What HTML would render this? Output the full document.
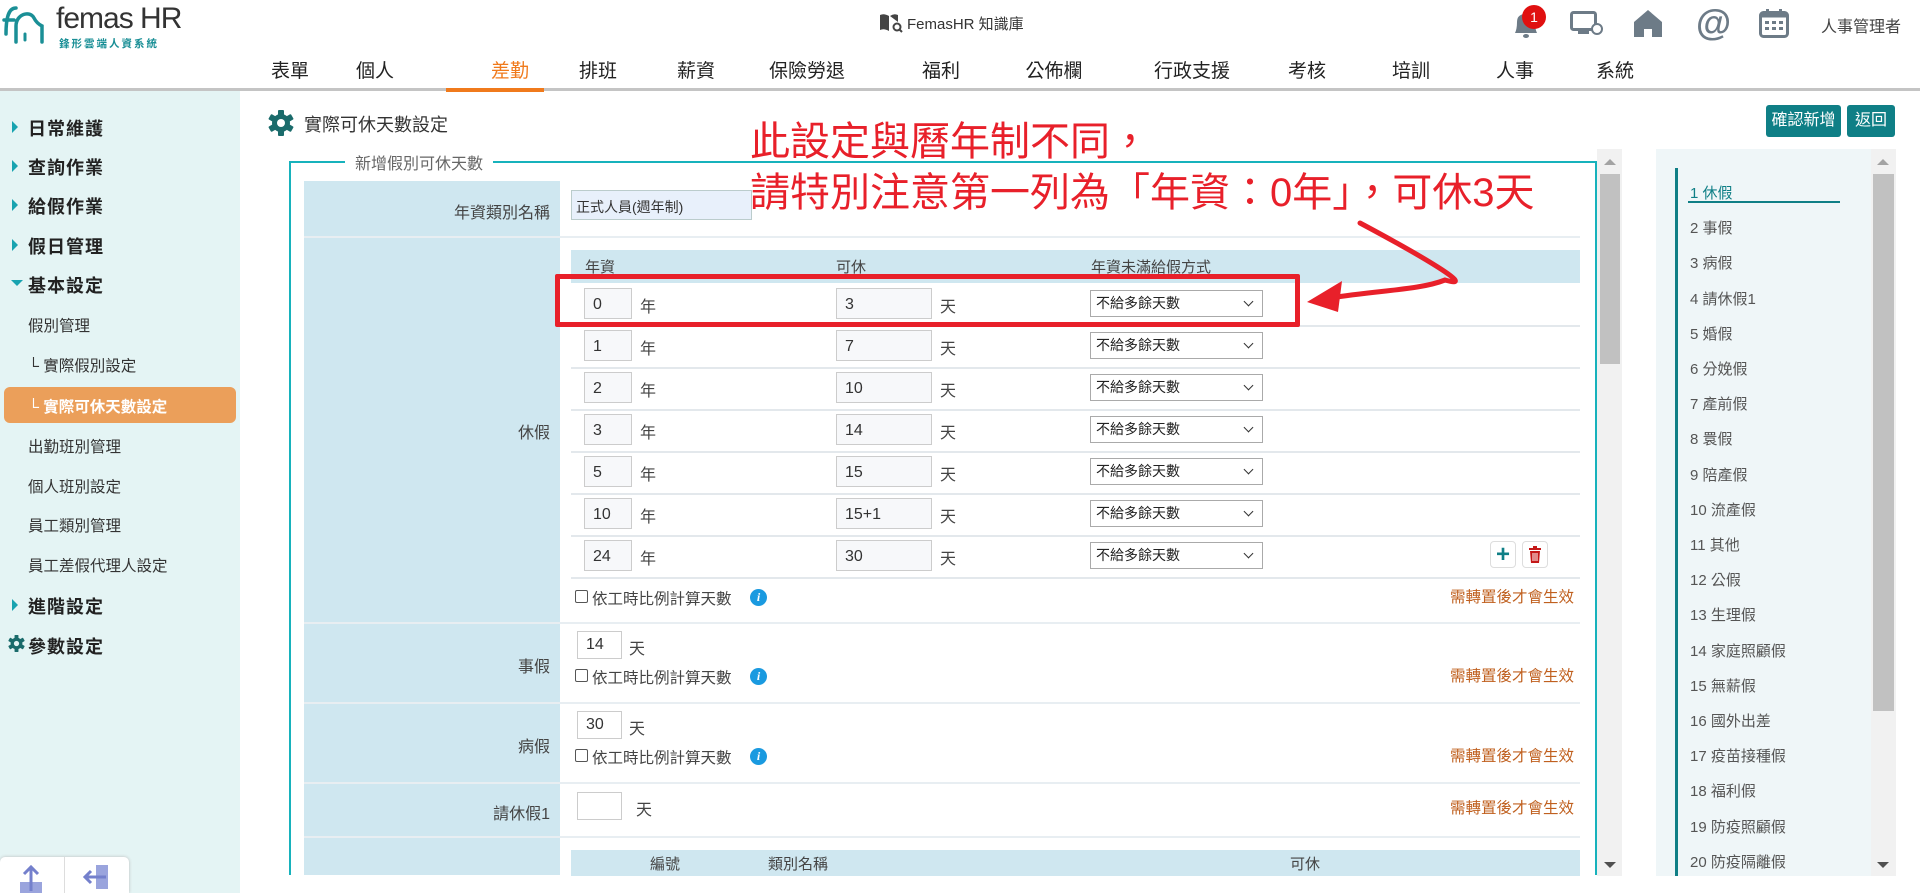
<!DOCTYPE html>
<html><head><meta charset="utf-8">
<style>
*{margin:0;padding:0;box-sizing:border-box}
body{width:1920px;height:893px;overflow:hidden;background:#fff;font-family:"Liberation Sans","Noto Sans CJK TC",sans-serif;color:#333;position:relative}
.a{position:absolute;white-space:nowrap}
.nav{top:56px;font-size:19px;color:#222;transform:translateX(-50%)}
.side{left:28px;font-size:18px;color:#222;font-weight:bold;letter-spacing:1px}
.sub{left:28px;font-size:15.5px;color:#333}
.tri{position:absolute;left:12px;width:0;height:0;border-top:6px solid transparent;border-bottom:6px solid transparent;border-left:6px solid #18a3b0}
.inp{position:absolute;border:1px solid #ccc;background:#f7f8fa;height:31px;font-size:16px;padding:0 0 0 8px;line-height:31px;color:#333}
.sel{position:absolute;border:1px solid #aaa;background:#fff;height:27px;width:173px;font-size:14px;padding:0 0 0 5px;line-height:25px;color:#222}
.sel:after{content:"";position:absolute;right:10px;top:7px;width:6px;height:6px;border-right:1.5px solid #333;border-bottom:1.5px solid #333;transform:rotate(45deg)}
.lbl{font-size:16px;color:#444}
.cb{position:absolute;width:13px;height:13px;border:1px solid #555;border-radius:2px;background:#fff}
.info{position:absolute;width:17px;height:17px;border-radius:50%;background:#1a9ae0;color:#fff;font-size:12px;font-weight:bold;font-style:italic;text-align:center;line-height:17px;font-family:"Liberation Serif",serif}
.warn{font-size:15.5px;color:#c0601f;right:346px}
.rl{left:1690px;font-size:15px;color:#555}
</style></head><body>

<!-- header -->
<svg class="a" style="left:2px;top:4px" width="50" height="42" viewBox="0 0 50 42"><path d="M4 30 C4 10 8 4 14 4 M2 16 H12" stroke="#1a8f96" stroke-width="3.5" fill="none" stroke-linecap="round"/><path d="M14 38 V22 C14 10 28 6 32 14 C34 18 36 20 40 22 V38" stroke="#1a8f96" stroke-width="3.5" fill="none" stroke-linecap="round"/><path d="M23 30 v6" stroke="#1a8f96" stroke-width="3" stroke-linecap="round"/></svg>
<div class="a" style="left:56px;top:2px;font-size:30px;color:#333;letter-spacing:-1px">femas HR</div>
<div class="a" style="left:59px;top:36px;font-size:10.5px;color:#1a8f96;font-weight:bold;letter-spacing:2px">鋒形雲端人資系統</div>

<svg class="a" style="left:879px;top:13px" width="24" height="20" viewBox="0 0 24 20"><path d="M1 2 Q5 0 10 3 V18 Q5 15 1 17Z M11 3 Q15 0 19 2 V9" fill="#444"/><circle cx="18" cy="14" r="3.5" stroke="#444" stroke-width="2" fill="none"/><path d="M20.5 16.5 L23 19" stroke="#444" stroke-width="2"/></svg>
<div class="a" style="left:907px;top:13px;font-size:15px;color:#333">FemasHR 知識庫</div>

<svg class="a" style="left:1511px;top:8px" width="30" height="32" viewBox="0 0 30 32"><path d="M4 25 Q6 21 6 14 Q6 6 15 6 Q24 6 24 14 Q24 21 26 25Z" fill="#6d7b87"/><ellipse cx="15" cy="28" rx="3" ry="2" fill="#6d7b87"/></svg>
<div class="a" style="left:1522px;top:5px;width:24px;height:24px;border-radius:50%;background:#e01010;color:#fff;font-size:14px;text-align:center;line-height:24px">1</div>
<svg class="a" style="left:1570px;top:11px" width="34" height="26" viewBox="0 0 34 26"><rect x="1.5" y="1.5" width="24" height="17" rx="2" stroke="#6d7b87" stroke-width="3" fill="none"/><rect x="8" y="20" width="11" height="3" fill="#6d7b87"/><circle cx="27" cy="18" r="5" stroke="#6d7b87" stroke-width="2" fill="#fff"/></svg>
<svg class="a" style="left:1633px;top:9px" width="30" height="29" viewBox="0 0 30 29"><path d="M15 1 L29 13 V28 H19 V20 H11 V28 H1 V13Z" fill="#6d7b87"/></svg>
<div class="a" style="left:1696px;top:2px;font-size:36px;font-weight:bold;color:#6d7b87">@</div>
<svg class="a" style="left:1759px;top:8px" width="30" height="30" viewBox="0 0 30 30"><rect x="1.5" y="4.5" width="27" height="24" rx="3" stroke="#6d7b87" stroke-width="3" fill="none"/><rect x="1.5" y="4.5" width="27" height="5" fill="#6d7b87"/><rect x="7" y="1" width="3" height="6" fill="#6d7b87"/><rect x="20" y="1" width="3" height="6" fill="#6d7b87"/><g fill="#6d7b87"><rect x="6" y="13" width="4" height="3"/><rect x="13" y="13" width="4" height="3"/><rect x="20" y="13" width="4" height="3"/><rect x="6" y="19" width="4" height="3"/><rect x="13" y="19" width="4" height="3"/><rect x="20" y="19" width="4" height="3"/></g></svg>
<div class="a" style="left:1821px;top:13px;font-size:16px;color:#444">人事管理者</div>

<div class="a nav" style="left:290px">表單</div>
<div class="a nav" style="left:375px">個人</div>
<div class="a nav" style="left:510px;color:#f07a1c">差勤</div>
<div class="a nav" style="left:598px">排班</div>
<div class="a nav" style="left:696px">薪資</div>
<div class="a nav" style="left:807px">保險勞退</div>
<div class="a nav" style="left:941px">福利</div>
<div class="a nav" style="left:1054px">公佈欄</div>
<div class="a nav" style="left:1192px">行政支援</div>
<div class="a nav" style="left:1307px">考核</div>
<div class="a nav" style="left:1411px">培訓</div>
<div class="a nav" style="left:1515px">人事</div>
<div class="a nav" style="left:1615px">系統</div>
<div class="a" style="left:0;top:88px;width:1920px;height:3px;background:#c4c4c4"></div>
<div class="a" style="left:446px;top:88px;width:98px;height:4px;background:#f07a1c"></div>

<!-- sidebar -->
<div class="a" style="left:0;top:91px;width:240px;height:802px;background:#e4f4f4"></div>
<div class="tri" style="top:121px"></div><div class="a side" style="top:115px">日常維護</div>
<div class="tri" style="top:160px"></div><div class="a side" style="top:154px">查詢作業</div>
<div class="tri" style="top:199px"></div><div class="a side" style="top:193px">給假作業</div>
<div class="tri" style="top:239px"></div><div class="a side" style="top:233px">假日管理</div>
<div class="a" style="left:11px;top:280px;width:0;height:0;border-left:6px solid transparent;border-right:6px solid transparent;border-top:6px solid #18a3b0"></div><div class="a side" style="top:272px">基本設定</div>
<div class="a sub" style="top:314px">假別管理</div>
<div class="a sub" style="top:354px">└ 實際假別設定</div>
<div class="a" style="left:4px;top:387px;width:232px;height:36px;border-radius:6px;background:#eb9f5a"></div>
<div class="a sub" style="top:395px;color:#fff;font-weight:bold">└ 實際可休天數設定</div>
<div class="a sub" style="top:435px">出勤班別管理</div>
<div class="a sub" style="top:475px">個人班別設定</div>
<div class="a sub" style="top:514px">員工類別管理</div>
<div class="a sub" style="top:554px">員工差假代理人設定</div>
<div class="tri" style="top:599px"></div><div class="a side" style="top:593px">進階設定</div>
<svg class="a" style="left:8px;top:635px" width="17" height="17" viewBox="0 0 26 26"><g fill="#1a6b6b"><circle cx="13" cy="13" r="9"/><rect x="10" y="0" width="6" height="26" rx="1"/><rect x="10" y="0" width="6" height="26" rx="1" transform="rotate(60 13 13)"/><rect x="10" y="0" width="6" height="26" rx="1" transform="rotate(120 13 13)"/></g><circle cx="13" cy="13" r="4" fill="#e4f4f4"/></svg>
<div class="a side" style="top:633px">參數設定</div>
<div class="a" style="left:0;top:857px;width:129px;height:36px;background:#fff;border-radius:5px 5px 0 0;box-shadow:0 0 3px #bbb"></div>
<div class="a" style="left:64px;top:857px;width:1px;height:36px;background:#ddd"></div>
<svg class="a" style="left:18px;top:864px" width="26" height="29" viewBox="0 0 26 29"><rect x="2" y="18" width="22" height="11" fill="#9aa4dd"/><path d="M13 27 V4 M6 10 L13 3 L20 10" stroke="#7480cc" stroke-width="3" fill="none"/></svg>
<svg class="a" style="left:82px;top:864px" width="28" height="26" viewBox="0 0 28 26"><rect x="14" y="1" width="12" height="24" fill="#9aa4dd"/><path d="M24 13 H3 M9 7 L3 13 L9 19" stroke="#7480cc" stroke-width="3" fill="none"/></svg>

<!-- title -->
<svg class="a" style="left:268px;top:110px" width="26" height="26" viewBox="0 0 26 26"><g fill="#1a6b6b"><circle cx="13" cy="13" r="9"/><rect x="10" y="0" width="6" height="26" rx="1"/><rect x="10" y="0" width="6" height="26" rx="1" transform="rotate(60 13 13)"/><rect x="10" y="0" width="6" height="26" rx="1" transform="rotate(120 13 13)"/></g><circle cx="13" cy="13" r="4" fill="#fff"/></svg>
<div class="a" style="left:304px;top:111px;font-size:18px;color:#333">實際可休天數設定</div>
<div class="a" style="left:1766px;top:105px;width:75px;height:32px;border-radius:3px;background:#0f7f86;color:#fff;font-size:16px;text-align:center;line-height:32px">確認新增</div>
<div class="a" style="left:1847px;top:105px;width:48px;height:32px;border-radius:3px;background:#0f7f86;color:#fff;font-size:16px;text-align:center;line-height:32px">返回</div>

<!-- fieldset -->
<div class="a" style="left:289px;top:161px;width:1308px;height:714px;border:2px solid #17b2bc;border-bottom:none"></div>
<div class="a" style="left:345px;top:150px;padding:0 10px;background:#fff;font-size:16px;color:#666">新增假別可休天數</div>

<!-- label column -->
<div class="a" style="left:304px;top:181px;width:256px;height:694px;background:#cfe7f0"></div>
<div class="a" style="left:304px;top:236px;width:1276px;height:2px;background:#e8eef2"></div>
<div class="a" style="left:304px;top:622px;width:1276px;height:2px;background:#e8eef2"></div>
<div class="a" style="left:304px;top:702px;width:1276px;height:2px;background:#e8eef2"></div>
<div class="a" style="left:304px;top:782px;width:1276px;height:2px;background:#e8eef2"></div>
<div class="a" style="left:304px;top:836px;width:1276px;height:2px;background:#e8eef2"></div>
<div class="a lbl" style="right:1370px;top:199px">年資類別名稱</div>
<div class="a lbl" style="right:1370px;top:419px">休假</div>
<div class="a lbl" style="right:1370px;top:653px">事假</div>
<div class="a lbl" style="right:1370px;top:733px">病假</div>
<div class="a lbl" style="right:1370px;top:800px">請休假1</div>

<div class="a" style="left:571px;top:190px;width:181px;height:30px;border:1px solid #bcc;background:#e8f0fb;font-size:14px;padding:6px 0 0 4px">正式人員(週年制)</div>

<!-- inner table -->
<div class="a" style="left:571px;top:250px;width:1009px;height:33px;background:#cfe7f0"></div>
<div class="a lbl" style="left:585px;top:256px;font-size:15px">年資</div>
<div class="a lbl" style="left:836px;top:256px;font-size:15px">可休</div>
<div class="a lbl" style="left:1091px;top:256px;font-size:15px">年資未滿給假方式</div>

<div class="a" style="left:571px;top:325px;width:1009px;height:2px;background:#e3e8ec"></div>
<div class="a" style="left:571px;top:367px;width:1009px;height:2px;background:#e3e8ec"></div>
<div class="a" style="left:571px;top:409px;width:1009px;height:2px;background:#e3e8ec"></div>
<div class="a" style="left:571px;top:451px;width:1009px;height:2px;background:#e3e8ec"></div>
<div class="a" style="left:571px;top:493px;width:1009px;height:2px;background:#e3e8ec"></div>
<div class="a" style="left:571px;top:535px;width:1009px;height:2px;background:#e3e8ec"></div>
<div class="a" style="left:571px;top:577px;width:1009px;height:2px;background:#e3e8ec"></div>

<div class="inp" style="left:584px;top:288px;width:48px">0</div><div class="a lbl" style="left:640px;top:293px">年</div><div class="inp" style="left:836px;top:288px;width:96px">3</div><div class="a lbl" style="left:940px;top:293px">天</div><div class="sel" style="left:1090px;top:290px">不給多餘天數</div>
<div class="inp" style="left:584px;top:330px;width:48px">1</div><div class="a lbl" style="left:640px;top:335px">年</div><div class="inp" style="left:836px;top:330px;width:96px">7</div><div class="a lbl" style="left:940px;top:335px">天</div><div class="sel" style="left:1090px;top:332px">不給多餘天數</div>
<div class="inp" style="left:584px;top:372px;width:48px">2</div><div class="a lbl" style="left:640px;top:377px">年</div><div class="inp" style="left:836px;top:372px;width:96px">10</div><div class="a lbl" style="left:940px;top:377px">天</div><div class="sel" style="left:1090px;top:374px">不給多餘天數</div>
<div class="inp" style="left:584px;top:414px;width:48px">3</div><div class="a lbl" style="left:640px;top:419px">年</div><div class="inp" style="left:836px;top:414px;width:96px">14</div><div class="a lbl" style="left:940px;top:419px">天</div><div class="sel" style="left:1090px;top:416px">不給多餘天數</div>
<div class="inp" style="left:584px;top:456px;width:48px">5</div><div class="a lbl" style="left:640px;top:461px">年</div><div class="inp" style="left:836px;top:456px;width:96px">15</div><div class="a lbl" style="left:940px;top:461px">天</div><div class="sel" style="left:1090px;top:458px">不給多餘天數</div>
<div class="inp" style="left:584px;top:498px;width:48px">10</div><div class="a lbl" style="left:640px;top:503px">年</div><div class="inp" style="left:836px;top:498px;width:96px">15+1</div><div class="a lbl" style="left:940px;top:503px">天</div><div class="sel" style="left:1090px;top:500px">不給多餘天數</div>
<div class="inp" style="left:584px;top:540px;width:48px">24</div><div class="a lbl" style="left:640px;top:545px">年</div><div class="inp" style="left:836px;top:540px;width:96px">30</div><div class="a lbl" style="left:940px;top:545px">天</div><div class="sel" style="left:1090px;top:542px">不給多餘天數</div>
<div class="a" style="left:1490px;top:541px;width:26px;height:27px;border:1px solid #ddd;border-radius:4px;color:#0f7f86;font-size:24px;font-weight:bold;text-align:center;line-height:25px">+</div>
<div class="a" style="left:1522px;top:541px;width:26px;height:27px;border:1px solid #ddd;border-radius:4px"></div>
<svg class="a" style="left:1528px;top:546px" width="14" height="17" viewBox="0 0 14 17"><rect x="1" y="2" width="12" height="2" fill="#c41818"/><rect x="5" y="0" width="4" height="2" fill="#c41818"/><path d="M2 5 H12 L11 17 H3Z" fill="#c41818"/><path d="M5 7 V15 M7 7 V15 M9 7 V15" stroke="#fff" stroke-width="1"/></svg>

<div class="cb" style="left:575px;top:590px"></div><div class="a lbl" style="left:592px;top:587px;font-size:15.5px">依工時比例計算天數</div><div class="info" style="left:750px;top:589px">i</div>
<div class="a warn" style="top:585px">需轉置後才會生效</div>

<div class="inp" style="left:577px;top:631px;width:45px;height:28px;line-height:26px;background:#fff">14</div><div class="a lbl" style="left:629px;top:635px">天</div>
<div class="cb" style="left:575px;top:669px"></div><div class="a lbl" style="left:592px;top:666px;font-size:15.5px">依工時比例計算天數</div><div class="info" style="left:750px;top:668px">i</div>
<div class="a warn" style="top:664px">需轉置後才會生效</div>

<div class="inp" style="left:577px;top:711px;width:45px;height:28px;line-height:26px;background:#fff">30</div><div class="a lbl" style="left:629px;top:715px">天</div>
<div class="cb" style="left:575px;top:749px"></div><div class="a lbl" style="left:592px;top:746px;font-size:15.5px">依工時比例計算天數</div><div class="info" style="left:750px;top:748px">i</div>
<div class="a warn" style="top:744px">需轉置後才會生效</div>

<div class="inp" style="left:577px;top:792px;width:45px;height:28px;background:#fff"></div><div class="a lbl" style="left:636px;top:796px">天</div>
<div class="a warn" style="top:796px">需轉置後才會生效</div>

<div class="a" style="left:571px;top:850px;width:1009px;height:26px;background:#cfe7f0"></div>
<div class="a lbl" style="left:650px;top:853px;font-size:15px">編號</div>
<div class="a lbl" style="left:768px;top:853px;font-size:15px">類別名稱</div>
<div class="a lbl" style="left:1290px;top:853px;font-size:15px">可休</div>

<!-- main scrollbar -->
<div class="a" style="left:1597px;top:149px;width:25px;height:727px;background:#f1f1f1"></div>
<div class="a" style="left:1600px;top:174px;width:20px;height:190px;background:#c1c1c1"></div>
<div class="a" style="left:1604px;top:159px;border-left:6px solid transparent;border-right:6px solid transparent;border-bottom:6px solid #a3a3a3"></div>
<div class="a" style="left:1604px;top:862px;border-left:6px solid transparent;border-right:6px solid transparent;border-top:6px solid #505050"></div>

<!-- right panel -->
<div class="a" style="left:1656px;top:149px;width:240px;height:727px;background:#eff6f8"></div>
<div class="a" style="left:1871px;top:149px;width:25px;height:727px;background:#f1f1f1"></div>
<div class="a" style="left:1873px;top:174px;width:21px;height:537px;background:#c1c1c1"></div>
<div class="a" style="left:1877px;top:159px;border-left:6px solid transparent;border-right:6px solid transparent;border-bottom:6px solid #a3a3a3"></div>
<div class="a" style="left:1877px;top:862px;border-left:6px solid transparent;border-right:6px solid transparent;border-top:6px solid #505050"></div>
<div class="a" style="left:1675px;top:168px;width:3px;height:708px;background:#0f7f86"></div>
<div class="a rl" style="top:182px;color:#0f7f86">1 休假</div>
<div class="a" style="left:1688px;top:201px;width:152px;height:2px;background:#0f7f86"></div>
<div class="a rl" style="top:217px">2 事假</div>
<div class="a rl" style="top:252px">3 病假</div>
<div class="a rl" style="top:288px">4 請休假1</div>
<div class="a rl" style="top:323px">5 婚假</div>
<div class="a rl" style="top:358px">6 分娩假</div>
<div class="a rl" style="top:393px">7 產前假</div>
<div class="a rl" style="top:428px">8 睘假</div>
<div class="a rl" style="top:464px">9 陪產假</div>
<div class="a rl" style="top:499px">10 流產假</div>
<div class="a rl" style="top:534px">11 其他</div>
<div class="a rl" style="top:569px">12 公假</div>
<div class="a rl" style="top:604px">13 生理假</div>
<div class="a rl" style="top:640px">14 家庭照顧假</div>
<div class="a rl" style="top:675px">15 無薪假</div>
<div class="a rl" style="top:710px">16 國外出差</div>
<div class="a rl" style="top:745px">17 疫苗接種假</div>
<div class="a rl" style="top:780px">18 福利假</div>
<div class="a rl" style="top:816px">19 防疫照顧假</div>
<div class="a rl" style="top:851px">20 防疫隔離假</div>

<!-- annotation -->
<div class="a" style="left:750px;top:119px;font-size:40px;color:#e8202a;line-height:46px">此設定與曆年制不同，</div>
<div class="a" style="left:750px;top:170px;font-size:40px;color:#e8202a;line-height:46px">請特別注意第一列為「年資：0年」，可休3天</div>
<div class="a" style="left:555px;top:274px;width:745px;height:53px;border:5px solid #e8202a;border-radius:2px"></div>
<svg class="a" style="left:1290px;top:215px" width="200" height="110" viewBox="1290 215 200 110"><path d="M1360 223 C1420 255 1480 290 1445 280 C1420 290 1380 290 1330 298" stroke="#e8202a" stroke-width="5" fill="none" stroke-linecap="round"/><path d="M1307 302 L1342 281 L1338 312Z" fill="#e8202a"/></svg>

</body></html>
